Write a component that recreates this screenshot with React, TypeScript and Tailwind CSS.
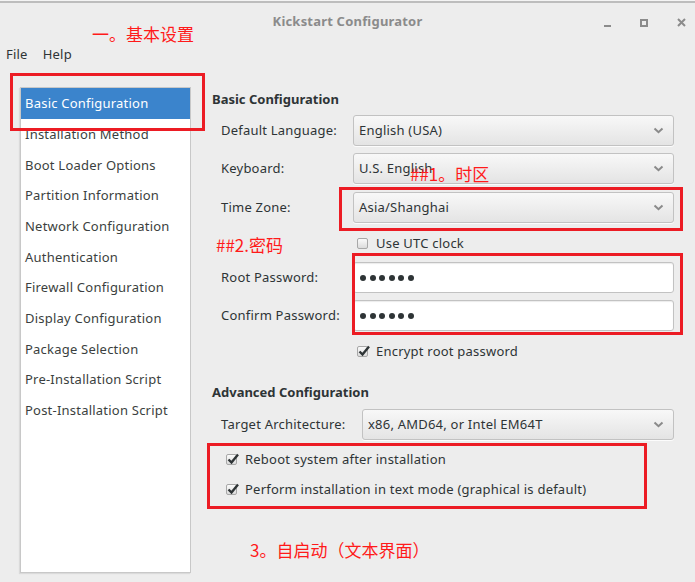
import React from "react";

const navItems = [
  "Basic Configuration",
  "Installation Method",
  "Boot Loader Options",
  "Partition Information",
  "Network Configuration",
  "Authentication",
  "Firewall Configuration",
  "Display Configuration",
  "Package Selection",
  "Pre-Installation Script",
  "Post-Installation Script",
];

const Chevron = () => (
  <svg width="11" height="7" viewBox="0 0 11 7" className="shrink-0">
    <path d="M1.5 1.5 L5.5 5.2 L9.5 1.5" fill="none" stroke="#8a8a8a" strokeWidth="2" />
  </svg>
);

const Combo = ({ value }: { value: string }) => (
  <div className="flex-1 h-full flex items-center justify-between pl-[5px] pr-[9px] rounded-[3px] border border-[#c2c2c2] bg-gradient-to-b from-[#f8f8f8] to-[#e4e4e4] shadow-[0_1px_0_rgba(255,255,255,0.8)]">
    <span>{value}</span>
    <Chevron />
  </div>
);

const PasswordField = () => (
  <div className="flex-1 h-full flex items-center gap-[3.6px] pl-[6px] rounded-[3px] border border-[#c2c2c2] bg-white shadow-[inset_0_1px_1px_rgba(0,0,0,0.08)]">
    {Array.from({ length: 6 }).map((_, i) => (
      <span key={i} className="w-[6px] h-[6px] rounded-full bg-[#2e3436]" />
    ))}
  </div>
);

const Check = ({ checked }: { checked: boolean }) => (
  <span className="relative w-[11px] h-[11px] shrink-0 rounded-[2px] border border-[#a8a8a8] bg-gradient-to-b from-[#fafafa] to-[#dcdcdc]">
    {checked && (
      <svg width="14" height="13" viewBox="0 0 14 13" className="absolute left-[-1px] top-[-3px]">
        <path d="M2.5 7.5 L5.5 10.5 L12 2.5" fill="none" stroke="#2e3436" strokeWidth="2.4" />
      </svg>
    )}
  </span>
);

const Row = ({ label, children, labelW = "w-[132px]", className = "" }: { label: string; children: React.ReactNode; labelW?: string; className?: string }) => (
  <div className={`flex items-center pl-[8px] ${className}`}>
    <span className={`${labelW} shrink-0`}>{label}</span>
    {children}
  </div>
);

export default function App() {
  return (
    <div
      className="relative w-[695px] h-[582px] overflow-hidden bg-[#ededed] text-[#2e3436] text-[13px] leading-none tracking-[0.22px]"
      style={{ fontFamily: '"Noto Sans", "DejaVu Sans", sans-serif' }}
    >
      <div className="h-[1px] bg-[#f4f4f4]" />
      <div className="h-[2px] bg-[#bdbdbd]" />

      {/* title bar */}
      <div className="relative h-[37px] flex items-center justify-center">
        <span className="font-bold text-[#8b8b8b] tracking-[0.2px] -mt-[1px]">Kickstart Configurator</span>
        <div className="absolute right-[9px] top-[13px] flex items-center gap-[29px]">
          <span className="w-[7px] h-[2px] bg-[#8b8b8b] mt-[9px]" />
          <span className="w-[8px] h-[8px] border-2 border-[#8b8b8b] mt-[2px]" />
          <svg width="9" height="9" viewBox="0 0 9 9" className="mt-[2px]">
            <path d="M1 1 L8 8 M8 1 L1 8" stroke="#8b8b8b" strokeWidth="2" />
          </svg>
        </div>
      </div>

      {/* menu bar */}
      <div className="h-[28px] flex items-center gap-[15px] pl-[6px] pt-[1px] text-[#2e3436]">
        <span>File</span>
        <span>Help</span>
      </div>

      <div className="flex pt-[19px]">
        {/* sidebar */}
        <div className="ml-[20px] w-[171px] h-[486px] bg-white border border-[#c8c8c8] shadow-[-1px_1px_1px_rgba(0,0,0,0.08)] flex flex-col">
          {navItems.map((item, i) => (
            <div
              key={item}
              className={`h-[30.7px] shrink-0 flex items-center pl-[4px] ${i === 0 ? "bg-[#3b84cc] text-white h-[31px]" : "text-[#3b3f40]"}`}
            >
              {item}
            </div>
          ))}
        </div>

        {/* main */}
        <div className="flex-1 pl-[22px] pr-[21px] flex flex-col">
          <div className="h-[24px] flex items-center font-bold -ml-[1px] tracking-normal">Basic Configuration</div>
          <Row label="Default Language:" className="mt-[4px] h-[31px]">
            <Combo value="English (USA)" />
          </Row>
          <Row label="Keyboard:" className="mt-[7px] h-[31px]">
            <Combo value="U.S. English" />
          </Row>
          <Row label="Time Zone:" className="mt-[8px] h-[31px]">
            <Combo value="Asia/Shanghai" />
          </Row>
          <div className="mt-[10px] h-[20px] flex items-center gap-[8px] pl-[144px]">
            <Check checked={false} />
            <span>Use UTC clock</span>
          </div>
          <Row label="Root Password:" className="mt-[9px] h-[31px]">
            <PasswordField />
          </Row>
          <Row label="Confirm Password:" className="mt-[7px] h-[31px]">
            <PasswordField />
          </Row>
          <div className="mt-[10px] h-[20px] flex items-center gap-[8px] pl-[144px]">
            <Check checked />
            <span>Encrypt root password</span>
          </div>
          <div className="mt-[19px] h-[24px] flex items-center font-bold -ml-[1px] tracking-normal">Advanced Configuration</div>
          <Row label="Target Architecture:" labelW="w-[141px]" className="mt-[5px] h-[31px]">
            <Combo value="x86, AMD64, or Intel EM64T" />
          </Row>
          <div className="mt-[9px] h-[20px] flex items-center gap-[8px] pl-[13px]">
            <Check checked />
            <span>Reboot system after installation</span>
          </div>
          <div className="mt-[10px] h-[20px] flex items-center gap-[8px] pl-[13px]">
            <Check checked />
            <span>Perform installation in text mode (graphical is default)</span>
          </div>
        </div>
      </div>

      {/* annotations */}
      <div
        className="absolute inset-0 pointer-events-none text-[#ff1a1a] text-[17px] leading-none tracking-normal"
        style={{ fontFamily: '"Noto Sans CJK SC", "Noto Sans", sans-serif' }}
      >
        <span className="absolute left-[92px] top-[25px]">一。基本设置</span>
        <span className="absolute left-[410px] top-[165px]">##1。时区</span>
        <span className="absolute left-[216px] top-[236px]">##2.密码</span>
        <span className="absolute left-[250px] top-[541px]">3。自启动（文本界面）</span>
        <div className="absolute left-[10px] top-[73px] w-[195px] h-[58px] border-[3px] border-[#ec1c24]" />
        <div className="absolute left-[339px] top-[187px] w-[344px] h-[44px] border-[3px] border-[#ec1c24]" />
        <div className="absolute left-[352px] top-[253px] w-[331px] h-[82px] border-[3px] border-[#ec1c24]" />
        <div className="absolute left-[207px] top-[443px] w-[440px] h-[66px] border-[3px] border-[#ec1c24]" />
      </div>
    </div>
  );
}
